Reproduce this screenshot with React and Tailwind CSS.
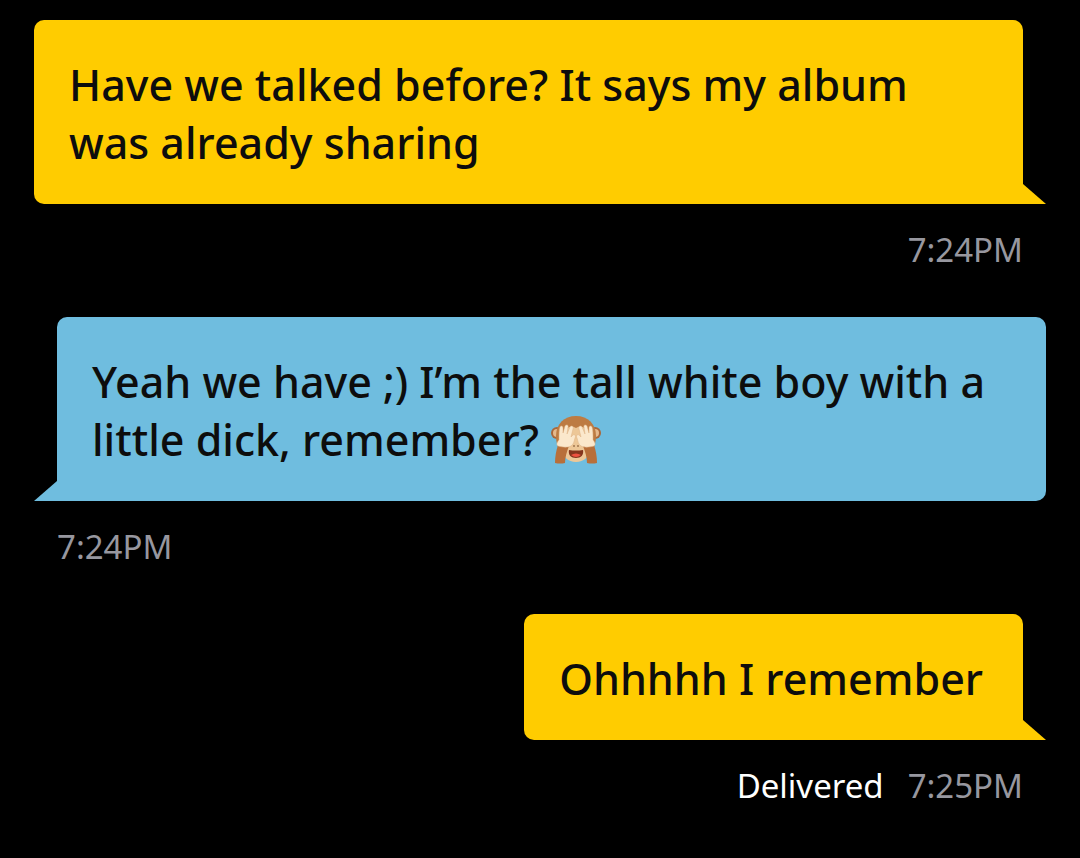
import clsx from 'clsx';

const messages = [
  { id: 1, mine: true, text: 'Have we talked before? It says my album was already sharing', time: '7:24PM' },
  { id: 2, mine: false, text: 'Yeah we have ;) I’m the tall white boy with a little dick, remember?', monkey: true, time: '7:24PM' },
  { id: 3, mine: true, text: 'Ohhhhh I remember', time: '7:25PM', status: 'Delivered' },
];

function Arm() {
  return (
    <>
      <path d="M5 48 C5 42 6 36 8 30 L19 31 C17 36 15 42 15 48 Q10 49 5 48Z" fill="#b86f3a" />
      <path d="M8 31 C6 30 7 27 9 25 C9 19 9 15 10 12 C11 10 13 11 13 13 L13 18 L15 11 C16 9 19 10 18 12 L17 19 L20 12 C21 10 24 11 23 14 L21 22 L23 20 C25 19 26 21 25 23 C24 26 24 29 21 31 C17 33 12 32 8 31Z" fill="#fbe8cc" stroke="#dcb286" strokeWidth="0.5" />
    </>
  );
}

function MonkeyIcon() {
  return (
    <svg viewBox="0 0 52 50" role="img" aria-label="See-no-evil monkey" className="inline-block w-[52px] h-[50px] align-[-9px]">
      <circle cx="7" cy="18" r="6" fill="#a9673a" />
      <circle cx="45" cy="18" r="6" fill="#a9673a" />
      <circle cx="7" cy="18" r="4" fill="#e5b98c" />
      <circle cx="45" cy="18" r="4" fill="#e5b98c" />
      <path d="M26 1 C38 1 46 9 46 21 C46 34 39 44 26 46 C13 44 6 34 6 21 C6 9 14 1 26 1Z" fill="#bd7b42" />
      <path d="M26 13 C31 9 38 13 38 20 C38 26 39 30 39 35 C39 42 34 47 26 47 C18 47 13 42 13 35 C13 30 14 26 14 20 C14 13 21 9 26 13Z" fill="#edc797" />
      <circle cx="24" cy="31" r="0.8" fill="#694020" />
      <circle cx="28" cy="31" r="0.8" fill="#694020" />
      <path d="M19 35 Q26 36 33 35 C34 40 31 43 26 43 C21 43 18 40 19 35Z" fill="#84351d" />
      <path d="M21 40 Q26 37 31 40 Q26 44 21 40Z" fill="#ee5140" />
      <Arm />
      <g transform="translate(52 0) scale(-1 1)">
        <Arm />
      </g>
    </svg>
  );
}

function Tail({ mine }) {
  return (
    <svg
      viewBox="0 0 23 20"
      aria-hidden="true"
      className={clsx('w-[23px] h-5 shrink-0', mine ? 'text-[#ffcc00]' : 'text-[#6fbddf]')}
    >
      <path d={mine ? 'M0 0 L23 20 H0Z' : 'M23 0 V20 H0Z'} fill="currentColor" />
    </svg>
  );
}

function Message({ message }) {
  const { mine, text, monkey, time, status } = message;

  return (
    <li className="flex flex-col">
      <div className={clsx('flex items-end', mine ? 'justify-end' : 'justify-start')}>
        {!mine && <Tail mine={false} />}
        <p
          className={clsx(
            'pl-[35px] pr-10 pt-9 pb-8 rounded-t-[10px] text-[43px] leading-[58px] font-medium text-[#0d0d0d]',
            mine ? 'bg-[#ffcc00] rounded-bl-[10px]' : 'bg-[#6fbddf] rounded-br-[10px]'
          )}
        >
          {text}
          {monkey && <> <MonkeyIcon /></>}
        </p>
        {mine && <Tail mine />}
      </div>
      <div
        className={clsx(
          'flex gap-6 px-[23px] pt-6 text-[33px] leading-[44px] font-normal text-[#97979f]',
          mine ? 'justify-end' : 'justify-start'
        )}
      >
        {status && <span className="text-white">{status}</span>}
        <time>{time}</time>
      </div>
    </li>
  );
}

export default function App() {
  return (
    <main className="min-h-screen bg-black px-[34px] py-5 font-['Noto_Sans',sans-serif]">
      <ul className="flex flex-col gap-[45px]">
        {messages.map((message) => (
          <Message key={message.id} message={message} />
        ))}
      </ul>
    </main>
  );
}
